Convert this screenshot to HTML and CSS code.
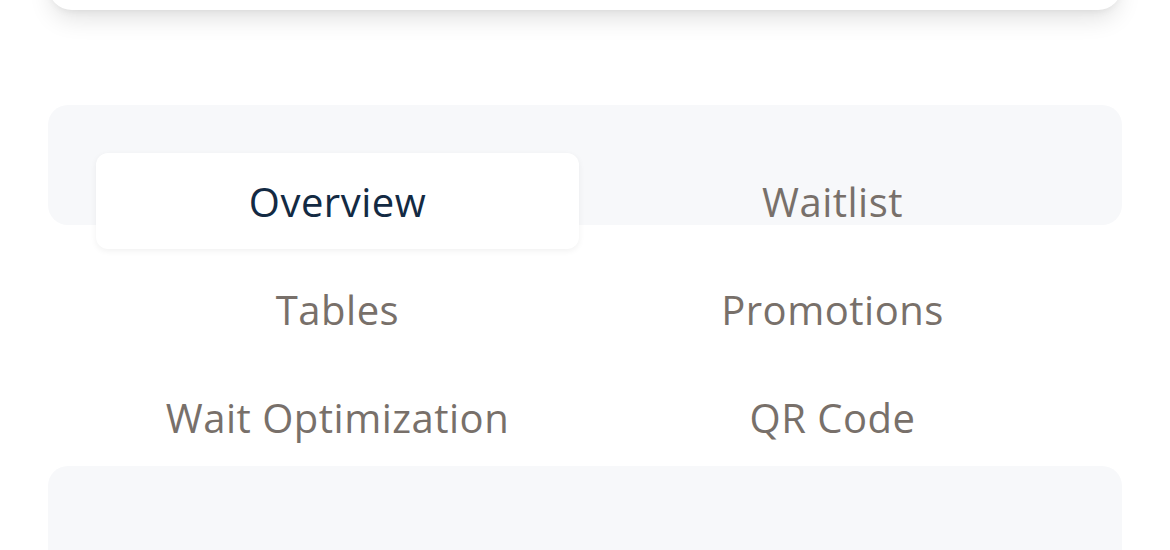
FILE: index.html
```html
<!DOCTYPE html>
<html lang="en">
<head>
<meta charset="utf-8">
<title>Tabs</title>
<link rel="stylesheet" href="styles.css">
</head>
<body>
<div class="page">
  <div class="card"></div>
  <div class="tabs">
    <div class="tablist">
      <div class="tab active">Overview</div>
      <div class="tab">Waitlist</div>
      <div class="tab">Tables</div>
      <div class="tab">Promotions</div>
      <div class="tab">Wait Optimization</div>
      <div class="tab">QR Code</div>
    </div>
    <div class="panel"></div>
  </div>
</div>
</body>
</html>
```

FILE: styles.css
```css
html, body {
  margin: 0;
  padding: 0;
  background: #ffffff;
  overflow: hidden;
}

body {
  font-family: "Open Sans", "Noto Sans", sans-serif;
}

.page {
  padding: 0 48px;
}

.card {
  height: 60px;
  margin-top: -50px;
  background: #ffffff;
  border-radius: 24px;
  box-shadow: 0 12px 24px -4px rgba(0, 0, 0, 0.12), 0 4px 8px -4px rgba(0, 0, 0, 0.08);
}

.tabs {
  margin-top: 95px;
}

.tablist {
  box-sizing: border-box;
  height: 120px;
  padding: 48px;
  background: #f7f8fa;
  border-radius: 20px;
  display: grid;
  grid-template-columns: 1fr 1fr;
  grid-auto-rows: 96px;
  column-gap: 12px;
  row-gap: 12px;
  align-content: start;
}

.tab {
  display: flex;
  align-items: center;
  justify-content: center;
  font-size: 40px;
  letter-spacing: 0.5px;
  color: #78706a;
  border-radius: 12px;
  white-space: nowrap;
}

.tab.active {
  background: #ffffff;
  color: #132a43;
  box-shadow: 0 2px 6px rgba(0, 0, 0, 0.06);
}

.panel {
  margin-top: 241px;
  height: 200px;
  background: #f7f8fa;
  border-radius: 20px;
}
```
